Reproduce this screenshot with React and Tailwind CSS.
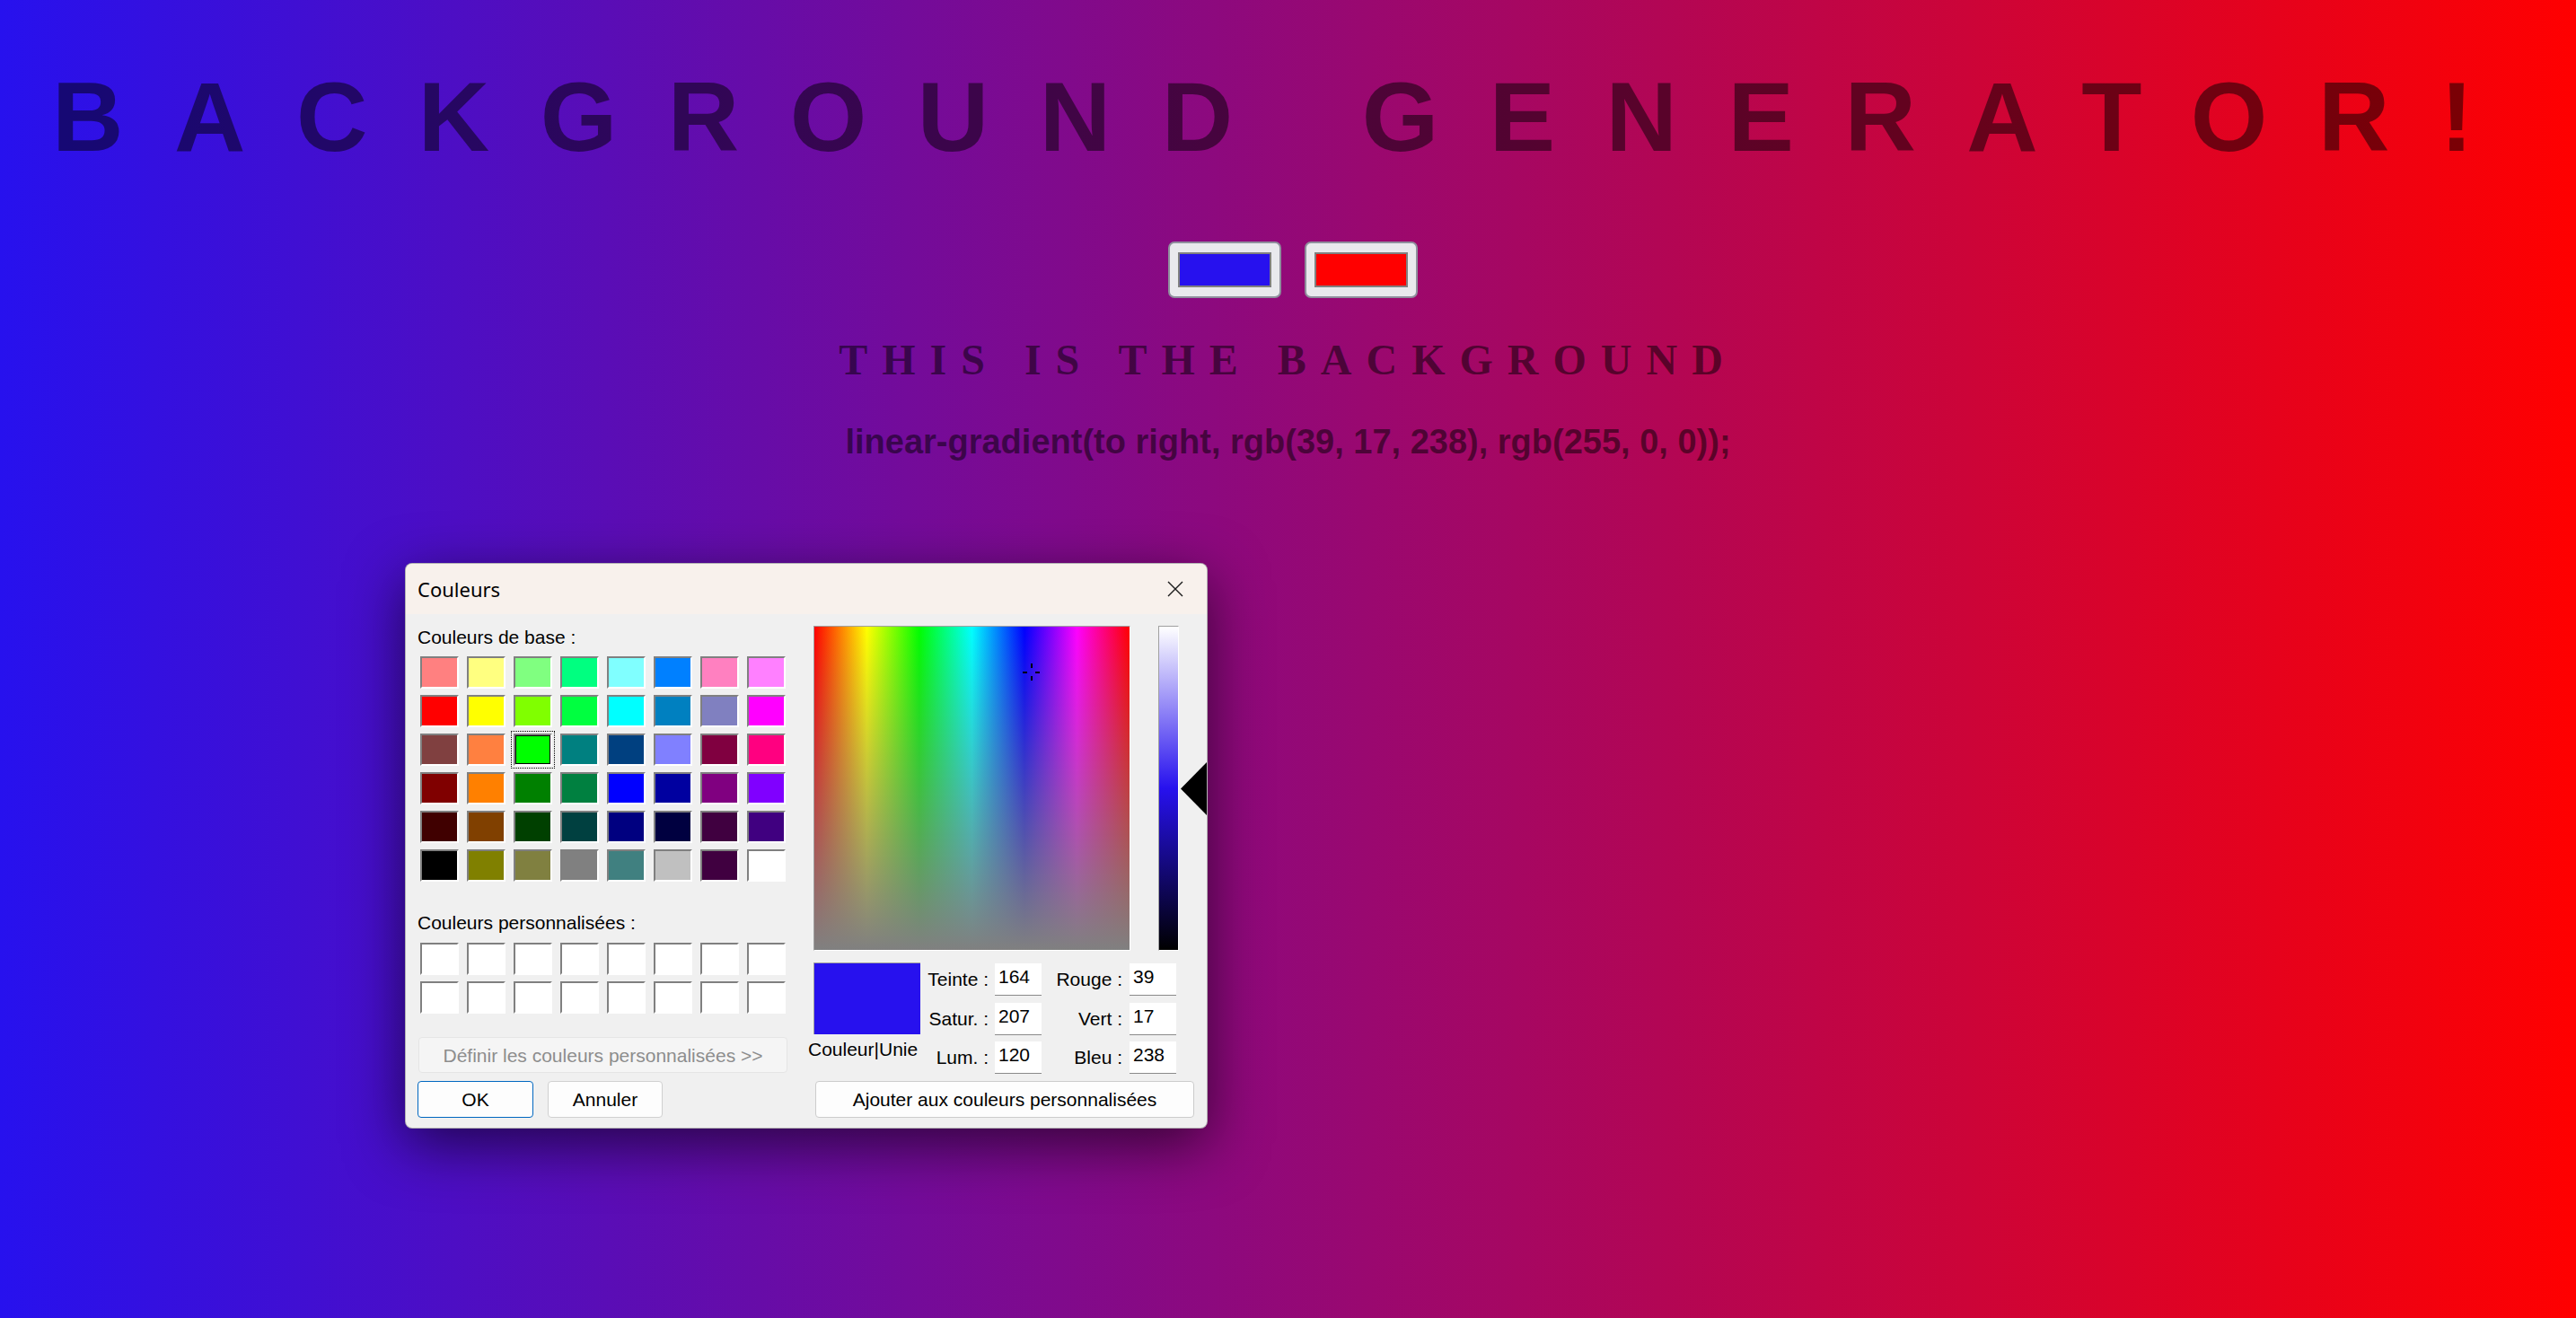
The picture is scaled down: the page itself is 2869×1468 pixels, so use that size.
import React from 'react';

const baseColors = [
  ['bg-[#ff8080]', 'bg-[#ffff80]', 'bg-[#80ff80]', 'bg-[#00ff80]', 'bg-[#80ffff]', 'bg-[#0080ff]', 'bg-[#ff80c0]', 'bg-[#ff80ff]'],
  ['bg-[#ff0000]', 'bg-[#ffff00]', 'bg-[#80ff00]', 'bg-[#00ff40]', 'bg-[#00ffff]', 'bg-[#0080c0]', 'bg-[#8080c0]', 'bg-[#ff00ff]'],
  ['bg-[#804040]', 'bg-[#ff8040]', 'bg-[#00ff00]', 'bg-[#008080]', 'bg-[#004080]', 'bg-[#8080ff]', 'bg-[#800040]', 'bg-[#ff0080]'],
  ['bg-[#800000]', 'bg-[#ff8000]', 'bg-[#008000]', 'bg-[#008040]', 'bg-[#0000ff]', 'bg-[#0000a0]', 'bg-[#800080]', 'bg-[#8000ff]'],
  ['bg-[#400000]', 'bg-[#804000]', 'bg-[#004000]', 'bg-[#004040]', 'bg-[#000080]', 'bg-[#000040]', 'bg-[#400040]', 'bg-[#400080]'],
  ['bg-[#000000]', 'bg-[#808000]', 'bg-[#808040]', 'bg-[#808080]', 'bg-[#408080]', 'bg-[#c0c0c0]', 'bg-[#400040]', 'bg-[#ffffff]'],
];

const sunken = 'border-2 border-t-[#808080] border-l-[#808080] border-b-white border-r-white';

function Swatch({ color, selected }) {
  return (
    <div
      className={`h-[36px] w-[43px] ${sunken} ${color} ${
        selected ? 'shadow-[inset_0_0_0_1px_#000] outline-1 outline-dotted outline-black outline-offset-2' : ''
      }`}
    />
  );
}

function ColorInput({ swatch }) {
  return (
    <div className="flex h-[63px] w-[126px] items-center justify-center rounded-[7px] border-2 border-[#8f8f9d] bg-[#e9e9ed]">
      <div className={`h-[39px] w-[104px] border-2 border-[#808080] ${swatch}`} />
    </div>
  );
}

function Field({ label, value, labelWidth, gap }) {
  return (
    <div className="flex h-[36px]">
      <span className={`${labelWidth} whitespace-nowrap pt-[7px] text-right`}>{label}</span>
      <div className={`${gap} h-[36px] w-[52px] border-b border-[#8a8a8a] bg-white pl-[4px] pt-[4px]`}>{value}</div>
    </div>
  );
}

function ColorDialog() {
  return (
    <div className="absolute left-[451px] top-[627px] h-[630px] w-[894px] overflow-hidden rounded-[8px] border border-black/25 bg-[#f0f0f0] text-[21px] leading-none text-black shadow-[0_18px_64px_rgba(0,0,0,0.6)] font-['Liberation_Sans',Arial,sans-serif]">
      <div className="flex h-[56px] items-center justify-between bg-[#f8f1ec] pl-[13px] pr-[26px]">
        <span className="text-[22px] font-['Noto_Sans',sans-serif]">Couleurs</span>
        <svg width="18" height="18" viewBox="0 0 18 18">
          <path d="M1 1L17 17M17 1L1 17" stroke="#1a1a1a" strokeWidth="1.4" fill="none" />
        </svg>
      </div>

      <div className="flex pl-[13px]">
        {/* left column */}
        <div className="w-[430px] pt-[15px]">
          <div>Couleurs de base :</div>
          <div className="ml-[3px] mt-[11px] grid grid-cols-[repeat(8,43px)] gap-x-[9px] gap-y-[7px]">
            {baseColors.map((row, r) =>
              row.map((c, i) => <Swatch key={`${r}-${i}`} color={c} selected={r === 2 && i === 2} />)
            )}
          </div>
          <div className="mt-[35px]">Couleurs personnalisées :</div>
          <div className="ml-[3px] mt-[12px] grid grid-cols-[repeat(8,43px)] gap-x-[9px] gap-y-[7px]">
            {Array.from({ length: 16 }).map((_, i) => (
              <Swatch key={i} color="bg-white" />
            ))}
          </div>
          <div className="ml-px mt-[26px] flex h-[40px] w-[411px] items-center justify-center rounded-[4px] border border-[#e5e5e5] bg-[#f5f5f5] text-[#8d8d8d]">
            Définir les couleurs personnalisées &gt;&gt;
          </div>
          <div className="mt-[9px] flex gap-[16px]">
            <div className="flex h-[41px] w-[129px] items-center justify-center rounded-[4px] border border-[#0067c0] bg-[#fdfdfd]">OK</div>
            <div className="flex h-[41px] w-[128px] items-center justify-center rounded-[4px] border border-[#d0d0d0] bg-[#fdfdfd]">Annuler</div>
          </div>
        </div>

        {/* right column */}
        <div className="ml-[13px] pt-[13px]">
          <div className="flex">
            <div className="relative h-[362px] w-[353px] border border-t-[#a0a0a0] border-l-[#a0a0a0] border-b-white border-r-white bg-[linear-gradient(to_bottom,rgba(128,128,128,0),#808080),linear-gradient(to_right,#ff0000,#ffff00,#00ff00,#00ffff,#0000ff,#ff00ff,#ff0000)]">
              <svg className="absolute left-[232px] top-[41px]" width="20" height="20" viewBox="0 0 20 20">
                <rect x="9" y="0" width="2" height="5" fill="#000" />
                <rect x="9" y="14" width="2" height="5" fill="#000" />
                <rect x="0" y="9" width="5" height="2" fill="#000" />
                <rect x="14" y="9" width="5" height="2" fill="#000" />
              </svg>
            </div>
            <div className="ml-[31px] h-[362px] w-[23px] border border-t-[#a0a0a0] border-l-[#a0a0a0] border-b-white border-r-white bg-[linear-gradient(to_bottom,#ffffff,#2711ee_50%,#000000)]" />
            <svg className="ml-[2px] mt-[152px]" width="29" height="59" viewBox="0 0 29 59">
              <polygon points="0,29.5 29,0 29,59" fill="#000" />
            </svg>
          </div>

          <div className="mt-[13px] flex">
            <div className="w-[119px]">
              <div className="h-[80px] w-[119px] border-t border-l border-[#a0a0a0] bg-[#2711ee]" />
              <div className="-ml-[6px] mt-[6px] whitespace-nowrap">Couleur|Unie</div>
            </div>
            <div className="mt-px flex flex-col gap-[7.5px]">
              <div className="flex">
                <Field label="Teinte :" value="164" labelWidth="w-[76px]" gap="ml-[7px]" />
                <Field label="Rouge :" value="39" labelWidth="w-[90px]" gap="ml-[8px]" />
              </div>
              <div className="flex">
                <Field label="Satur. :" value="207" labelWidth="w-[76px]" gap="ml-[7px]" />
                <Field label="Vert :" value="17" labelWidth="w-[90px]" gap="ml-[8px]" />
              </div>
              <div className="flex">
                <Field label="Lum. :" value="120" labelWidth="w-[76px]" gap="ml-[7px]" />
                <Field label="Bleu :" value="238" labelWidth="w-[90px]" gap="ml-[8px]" />
              </div>
            </div>
          </div>

          <div className="ml-[2px] mt-[8px] flex h-[41px] w-[422px] items-center justify-center rounded-[4px] border border-[#cccccc] bg-[#fdfdfd]">
            Ajouter aux couleurs personnalisées
          </div>
        </div>
      </div>
    </div>
  );
}

export default function App() {
  return (
    <div className="relative flex h-screen w-full flex-col items-center overflow-hidden bg-[linear-gradient(to_right,#2711ee,#ff0000)]">
      <h1 className="mt-[75px] whitespace-nowrap text-center text-[110px] font-bold leading-none tracking-[56.5px] text-black/50 font-['Liberation_Sans',Arial,sans-serif]">
        BACKGROUND GENERATOR!
      </h1>

      <div className="mt-[84px] flex gap-[26px] pl-[11px]">
        <ColorInput swatch="bg-[#2711ee]" />
        <ColorInput swatch="bg-[#ff0000]" />
      </div>

      <h3 className="mt-[45px] whitespace-nowrap text-[48px] font-bold leading-none tracking-[16px] text-black/50 font-['Liberation_Serif','Times_New_Roman',serif]">
        THIS IS THE BACKGROUND
      </h3>

      <p className="mt-[48px] whitespace-nowrap text-[38px] font-bold leading-none text-black/50 font-['Liberation_Sans',Arial,sans-serif]">
        linear-gradient(to right, rgb(39, 17, 238), rgb(255, 0, 0));
      </p>

      <ColorDialog />
    </div>
  );
}
